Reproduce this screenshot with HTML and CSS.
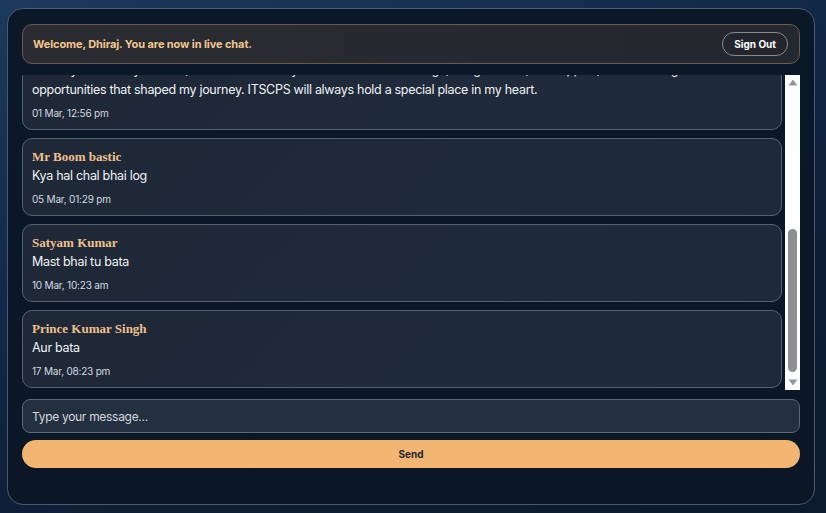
FILE: index.html
```html
<!DOCTYPE html>
<html lang="en">
<head>
<meta charset="utf-8">
<title>Live Chat</title>
<link rel="stylesheet" href="styles.css">
</head>
<body>
<div class="chat-card">
  <header class="chat-header">
    <span class="welcome">Welcome, Dhiraj. You are now in live chat.</span>
    <button class="signout">Sign Out</button>
  </header>
  <div class="messages-wrap">
    <div class="messages">
      <div class="message-list">
        <div class="msg">
          <div class="msg-name">Aman Verma</div>
          <div class="msg-text">Hello everyone, kaise ho sab?</div>
          <div class="msg-time">25 Feb, 09:14 am</div>
        </div>
        <div class="msg">
          <div class="msg-name">Rohit Sharma</div>
          <div class="msg-text">Badhiya bhai, tum batao</div>
          <div class="msg-time">25 Feb, 11:02 am</div>
        </div>
        <div class="msg">
          <div class="msg-name">Neha Gupta</div>
          <div class="msg-text">Farewell ki photos kab aayengi?</div>
          <div class="msg-time">28 Feb, 06:45 pm</div>
        </div>
        <div class="msg">
          <div class="msg-name">Dhiraj</div>
          <div class="msg-text">I am truly grateful for the wonderful years I spent at ITSCPS.<br>Thank you to every teacher, the staff and all my friends for the knowledge, the guidance, the support, the encouragement and the<br>opportunities that shaped my journey. ITSCPS will always hold a special place in my heart.</div>
          <div class="msg-time">01 Mar, 12:56 pm</div>
        </div>
        <div class="msg">
          <div class="msg-name">Mr Boom bastic</div>
          <div class="msg-text">Kya hal chal bhai log</div>
          <div class="msg-time">05 Mar, 01:29 pm</div>
        </div>
        <div class="msg">
          <div class="msg-name">Satyam Kumar</div>
          <div class="msg-text">Mast bhai tu bata</div>
          <div class="msg-time">10 Mar, 10:23 am</div>
        </div>
        <div class="msg">
          <div class="msg-name">Prince Kumar Singh</div>
          <div class="msg-text">Aur bata</div>
          <div class="msg-time">17 Mar, 08:23 pm</div>
        </div>
      </div>
    </div>
    <div class="scrollbar" aria-hidden="true">
      <div class="sb-btn">
        <svg width="10" height="7" viewBox="0 0 10 7"><polygon points="5,0.5 9.5,6.5 0.5,6.5" fill="#979797"/></svg>
      </div>
      <div class="sb-track">
        <div class="sb-thumb"></div>
      </div>
      <div class="sb-btn">
        <svg width="10" height="7" viewBox="0 0 10 7"><polygon points="0.5,0.5 9.5,0.5 5,6.5" fill="#979797"/></svg>
      </div>
    </div>
  </div>
  <div class="composer">
    <input class="msg-input" type="text" placeholder="Type your message...">
    <button class="send">Send</button>
  </div>
</div>
</body>
</html>
```
FILE: styles.css
```css
* { box-sizing: border-box; }

html, body {
  margin: 0;
  height: 513px;
  overflow: hidden;
}

body {
  background: linear-gradient(160deg, #1b3a5c 0%, #13294a 35%, #0d1d33 70%, #0b1a2e 100%);
  font-family: Inter, "Noto Sans", sans-serif;
  padding: 8px 10px 0 7px;
}

.chat-card {
  width: 808px;
  height: 497px;
  border: 1px solid #4a5a6e;
  border-radius: 16px;
  background: linear-gradient(180deg, #0b1828 0%, #0b1727 100%);
  padding: 15px 14px;
  display: flex;
  flex-direction: column;
}

.chat-header {
  height: 40px;
  flex: none;
  border: 1px solid #6b5b49;
  border-radius: 10px;
  background: linear-gradient(90deg, #2a2c31 0%, #23272e 100%);
  display: flex;
  align-items: center;
  justify-content: space-between;
  padding: 0 11px 0 10px;
}

.welcome {
  color: #f4c58f;
  font-weight: 700;
  font-size: 11px;
  letter-spacing: -0.1px;
}

.signout {
  font-family: Inter, sans-serif;
  background: #22252b;
  color: #ffffff;
  font-weight: 700;
  font-size: 10px;
  border: 1px solid #8a8a8a;
  border-radius: 12px;
  height: 24px;
  padding: 0 11px;
}

.messages-wrap {
  margin-top: 11px;
  height: 315px;
  flex: none;
  display: flex;
  gap: 3px;
}

.messages {
  flex: 1;
  min-width: 0;
  overflow: hidden;
  display: flex;
  flex-direction: column-reverse;
}

.scrollbar {
  width: 15px;
  flex: none;
  background: #ffffff;
  display: flex;
  flex-direction: column;
}

.sb-btn {
  height: 15px;
  flex: none;
  display: flex;
  align-items: center;
  justify-content: center;
}

.sb-track {
  flex: 1;
  display: flex;
  flex-direction: column;
  justify-content: flex-end;
  align-items: center;
  padding-bottom: 3px;
}

.sb-thumb {
  width: 9px;
  height: 143px;
  border-radius: 5px;
  background: #8f8f8f;
}

.message-list {
  display: flex;
  flex-direction: column;
  gap: 8px;
  padding-bottom: 2px;
}

.msg {
  flex: none;
  border: 1px solid #566170;
  border-radius: 10px;
  background: linear-gradient(135deg, #1e2837 0%, #1f2a3a 60%, #1e2a3b 100%);
  padding: 8px 10px 9px 9px;
}

.msg-name {
  font-family: "Liberation Serif", "DejaVu Serif", serif;
  font-weight: 700;
  font-size: 13px;
  line-height: 19px;
  color: #f0c08b;
}

.msg-text {
  color: #f1f3f5;
  font-size: 12.5px;
  line-height: 20px;
  letter-spacing: -0.3px;
  white-space: nowrap;
  overflow: hidden;
}

.msg-time {
  color: #d6dae0;
  font-size: 10px;
  line-height: 14px;
  margin-top: 6px;
  letter-spacing: -0.2px;
}

.composer {
  display: flex;
  flex-direction: column;
  gap: 7px;
  margin-top: 9px;
}

.msg-input {
  height: 34px;
  border: 1px solid #5c6674;
  border-radius: 8px;
  background: #243040;
  color: #e6e9ee;
  font-family: Inter, sans-serif;
  font-size: 12px;
  padding: 0 9px;
  outline: none;
  letter-spacing: -0.3px;
}

.msg-input::placeholder {
  color: #d3d7dd;
}

.send {
  height: 28px;
  border: none;
  border-radius: 14px;
  background: #f2b672;
  color: #1c2635;
  font-family: Inter, sans-serif;
  font-weight: 700;
  font-size: 10px;
}
```
